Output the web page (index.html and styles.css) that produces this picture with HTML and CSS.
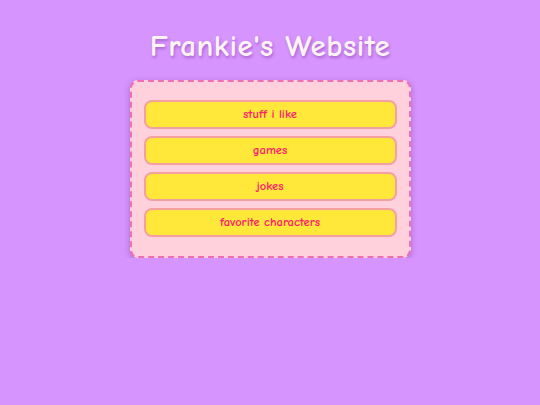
FILE: index.html
```html
<!DOCTYPE html>
<html lang="en">

<head>
    <meta charset="UTF-8">
    <meta name="viewport" content="width=device-width, initial-scale=1.0">
    <title>Frankie's Website</title>
    <link rel="stylesheet" href="styles.css">
</head>

<body>
    <header>
        <h1>Frankie's Website</h1>
    </header>

    <nav class="menu">
        <a class="menu-btn" href="#">stuff i like</a>
        <a class="menu-btn" href="#">games</a>
        <a class="menu-btn" href="#">jokes</a>
        <a class="menu-btn" href="#">favorite characters</a>
    </nav>
</body>

</html>
```

FILE: styles.css
```css
body {
    font-family: "Comic Sans MS", "Comic Neue", "DejaVu Sans", sans-serif;
    margin: 0;
    padding: 0;
    background-color: #d694fe;
}

header {
    text-align: center;
    padding-top: 27px;
}

h1 {
    margin: 0;
    font-size: 31px;
    line-height: 38px;
    letter-spacing: 0.5px;
    color: #fff3f3;
    text-shadow: 1px 2px 3px rgba(120, 40, 150, 0.45);
}

.menu {
    width: 253px;
    margin: 15px auto 0;
    padding: 18px 12px 19px;
    background-color: #ffd1dc;
    border: 2px dashed #f06eb4;
    border-radius: 8px;
    box-shadow: 0 2px 6px rgba(90, 30, 120, 0.35);
    display: flex;
    flex-direction: column;
    gap: 7px;
}

.menu-btn {
    display: block;
    height: 25px;
    line-height: 25px;
    text-align: center;
    background-color: #ffe83a;
    border: 2px solid #f4a0a0;
    border-radius: 8px;
    color: #ff1a6e;
    font-size: 12.5px;
    font-weight: bold;
    text-decoration: none;
}
```
